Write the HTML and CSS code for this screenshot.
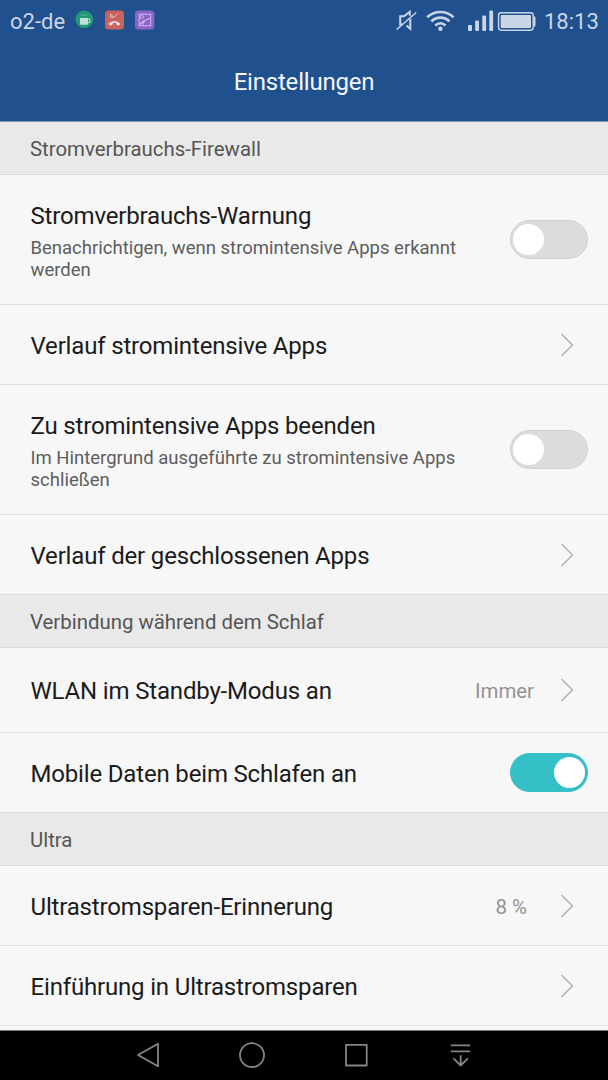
FILE: index.html
```html
<!DOCTYPE html>
<html lang="de">
<head>
<meta charset="utf-8">
<title>Einstellungen</title>
<link rel="stylesheet" href="styles.css">
</head>
<body>
<svg class="defs" width="0" height="0" aria-hidden="true">
  <symbol id="chevron" viewBox="0 0 14 26"><path d="M1.500 2 12.500 13 1.500 24" fill="none" stroke="#a9a9a9" stroke-width="1.200"/></symbol>
</svg>
<div class="screen">
  <header class="top">
    <div class="status">
      <span class="carrier">o2-de</span>
      <svg class="notes" width="82" height="22" viewBox="0 0 82 22">
        <circle cx="9.300" cy="11.200" r="9" fill="#173f72" opacity=".6"/>
        <circle cx="9.300" cy="10.400" r="8.900" fill="#239878"/>
        <path d="M5 9h8v5.800q0 1-1 1H6q-1 0-1-1z" fill="#c4ded8"/>
        <path d="M13 10h1.800v3.500H13" fill="none" stroke="#c4ded8" stroke-width="1"/>
        <path d="M6.700 5.200v1.600M9 5.200v1.600M11.200 5.200v1.600" stroke="#6cbda8" stroke-width="1"/>
        <rect x="30" y="1.500" width="19" height="19" rx="3.500" fill="#c9635e"/>
        <path d="M33.400 14.700q6-5.600 12.200 0l-2.200 2-2.200-1.500v-1.300q-1.700-.5-3.400 0v1.300l-2.200 1.500z" fill="#f0dcdf"/>
        <path d="M35.500 4.800v3.600h3.600M35.800 5.200l3.200 3.200 4-4" fill="none" stroke="#e6bfc0" stroke-width="1"/>
        <rect x="60" y="1.500" width="19.300" height="19" rx="3.500" fill="#8d62c9"/>
        <rect x="64.200" y="5.200" width="11.500" height="11.500" fill="none" stroke="#cbb9e5" stroke-width="1"/>
        <path d="M64.500 15.500l4-3.500 1.500 1M67.500 16.500c.8-4.500 3.600-6.500 8-7" fill="none" stroke="#cbb9e5" stroke-width="1.100"/>
        <circle cx="66.800" cy="8" r="1.600" fill="none" stroke="#cbb9e5" stroke-width=".9"/>
      </svg>
      <svg class="signals" width="144" height="24" viewBox="0 0 144 24">
        <g fill="none" stroke="#c9d6e8">
          <path d="M6.500 15.500H4.200V7.300H8l5.800-4.500v4M10.500 16.500l3.800 3.300v-10" stroke-width="2"/>
          <path d="M.7 20.500 20.200 3.500" stroke-width="1.500"/>
          <path d="M31.200 8.200c7.200-7 19.200-7 26.400 0" stroke-width="2.600"/>
          <path d="M35.300 12.400c5.200-5 13-5 18.200 0" stroke-width="2.600"/>
          <path d="M39.300 16.500c3-3 7.200-3 10.200 0" stroke-width="2.600"/>
        </g>
        <g fill="#c9d6e8">
          <circle cx="44.400" cy="19.800" r="2.200"/>
          <rect x="72" y="16" width="4" height="6" rx="1"/>
          <rect x="79.200" y="11.500" width="3.800" height="10.500" rx="1"/>
          <rect x="86.300" y="6.500" width="3.800" height="15.500" rx="1"/>
          <rect x="93.300" y="1.500" width="3.800" height="20.500" rx="1"/>
          <rect x="104.700" y="6" width="30.300" height="13" rx=".8"/>
          <path d="M137.500 7q2 0 2 2v7q0 2-2 2z"/>
        </g>
        <rect x="102.600" y="3.800" width="34.600" height="17.400" rx="2.600" fill="none" stroke="#c9d6e8" stroke-width="1.400"/>
      </svg>
      <span class="clock">18:13</span>
    </div>
    <h1 class="title">Einstellungen</h1>
  </header>
  <main class="list">
    <h2 class="section">Stromverbrauchs-Firewall</h2>
    <div class="row tall">
      <div class="text"><div class="name">Stromverbrauchs-Warnung</div><div class="hint">Benachrichtigen, wenn stromintensive Apps erkannt<br>werden</div></div>
      <span class="switch"></span>
    </div>
    <div class="row"><div class="name">Verlauf stromintensive Apps</div><svg class="chevron"><use href="#chevron"/></svg></div>
    <div class="row tall">
      <div class="text"><div class="name">Zu stromintensive Apps beenden</div><div class="hint">Im Hintergrund ausgeführte zu stromintensive Apps<br>schließen</div></div>
      <span class="switch"></span>
    </div>
    <div class="row"><div class="name">Verlauf der geschlossenen Apps</div><svg class="chevron"><use href="#chevron"/></svg></div>
    <h2 class="section">Verbindung während dem Schlaf</h2>
    <div class="row medium"><div class="name">WLAN im Standby-Modus an</div><span class="value">Immer</span><svg class="chevron"><use href="#chevron"/></svg></div>
    <div class="row"><div class="name">Mobile Daten beim Schlafen an</div><span class="switch on"></span></div>
    <h2 class="section">Ultra</h2>
    <div class="row"><div class="name">Ultrastromsparen-Erinnerung</div><span class="value percent">8 %</span><svg class="chevron"><use href="#chevron"/></svg></div>
    <div class="row"><div class="name">Einführung in Ultrastromsparen</div><svg class="chevron"><use href="#chevron"/></svg></div>
  </main>
  <nav class="nav">
    <svg width="608" height="49" viewBox="0 0 608 49" fill="none" stroke="#858585" stroke-width="1.800" stroke-linejoin="round" stroke-linecap="round">
      <path d="M158 12.800v22.400L138 24z"/>
      <circle cx="252" cy="24.200" r="12"/>
      <rect x="346" y="13.800" width="20.700" height="20.700"/>
      <path d="M451.500 14.400h18M451.500 20.300h18M460.700 25v9.500M454 27.800l6.700 6.700 6.700-6.700"/>
    </svg>
  </nav>
</div>
</body>
</html>
```
FILE: styles.css
```css
* { box-sizing: border-box; }

body {
  margin: 0;
  font-family: Roboto, "Noto Sans", sans-serif;
  background: #000;
}

.defs { display: block; height: 0; }

.screen {
  width: 608px;
  height: 1080px;
  display: flex;
  flex-direction: column;
  overflow: hidden;
}

.top {
  height: 122px;
  flex: none;
  background: #20508d;
  border-bottom: 1px solid #7d99c0;
}

.status {
  height: 42px;
  display: flex;
  align-items: center;
  padding: 0 10px;
  color: #c9d6e8;
  font-size: 22px;
}

.carrier { width: 65px; white-space: nowrap; }

.notes { margin-top: -2px; }

.signals { margin: -1px 4px 0 auto; }

.clock { width: 54px; white-space: nowrap; }

.title {
  margin: 0;
  height: 79px;
  line-height: 81px;
  text-align: center;
  font-size: 24px;
  font-weight: 400;
  letter-spacing: -0.2px;
  color: #f4f7fb;
}

.list {
  flex: 1;
  background: #f7f7f7;
}

.section {
  margin: 0;
  height: 53px;
  padding-left: 30px;
  line-height: 54px;
  font-size: 20.4px;
  font-weight: 400;
  color: #555;
  background: #e9e9e9;
  border-bottom: 1px solid #dadada;
}

.row {
  height: 80px;
  display: flex;
  align-items: center;
  padding: 2px 20px 0 30.5px;
  border-bottom: 1px solid #dedede;
}

.row.tall { height: 130px; }

.row.medium { height: 85px; }

.name {
  font-size: 24px;
  line-height: 30px;
  letter-spacing: -0.17px;
  color: #1b1b1b;
  white-space: nowrap;
}

.hint {
  margin-top: 6px;
  font-size: 18.5px;
  line-height: 22px;
  color: #5d5d5d;
  white-space: nowrap;
}

.value {
  margin-left: auto;
  margin-right: 26px;
  font-size: 20.4px;
  color: #929292;
}

.value.percent { margin-right: 33px; }

.chevron {
  width: 14px;
  height: 26px;
  flex: none;
  margin: 0 14px 2px auto;
}

.value + .chevron { margin-left: 0; }

.switch {
  width: 78px;
  height: 39px;
  flex: none;
  margin: 0 0 2px auto;
  padding: 3px 2px;
  display: flex;
  border: 1px solid #cfd0d0;
  border-radius: 20px;
  background: #dbdddc;
}

.switch::before {
  content: "";
  width: 31px;
  height: 31px;
  border-radius: 50%;
  background: #fff;
}

.switch.on {
  justify-content: flex-end;
  background: #35bfc6;
  border-color: #35bfc6;
}

.nav {
  height: 50px;
  flex: none;
  background: #000;
  border-top: 1px solid #777;
}

.nav svg { display: block; }
```
